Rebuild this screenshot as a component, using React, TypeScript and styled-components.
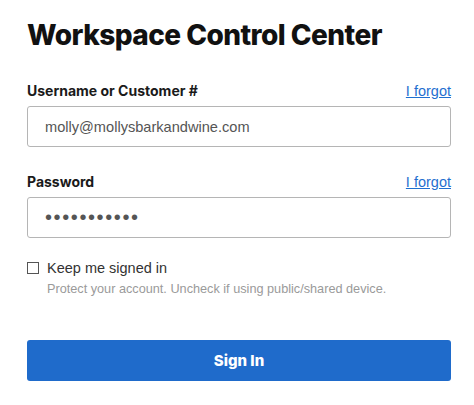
import styled, { createGlobalStyle } from "styled-components";

const GlobalStyle = createGlobalStyle`
  body {
    margin: 0;
    background: #fff;
    font-family: "Liberation Sans", Arial, sans-serif;
  }
`;

const Page = styled.div`
  width: 424px;
  padding: 18px 0 0 27px;
`;

const Title = styled.h1`
  margin: 0 0 30px;
  font-family: Inter, "Noto Sans", sans-serif;
  font-weight: 800;
  font-size: 28px;
  line-height: 34px;
  letter-spacing: -0.55px;
  color: #111;
`;

const Field = styled.div<{ $gap: number }>`
  margin-bottom: ${(p) => p.$gap}px;
`;

const LabelRow = styled.div`
  display: flex;
  justify-content: space-between;
  align-items: baseline;
  margin-bottom: 7px;
`;

const Label = styled.label`
  font-family: Inter, "Noto Sans", sans-serif;
  font-weight: 700;
  font-size: 14px;
  color: #1a1a1a;
`;

const Forgot = styled.a`
  font-size: 14.5px;
  color: #1f6fd0;
  text-decoration: underline;
  cursor: pointer;
`;

const Input = styled.input<{ $dots?: boolean }>`
  box-sizing: border-box;
  width: 100%;
  height: 41px;
  padding: 0 17px;
  border: 1px solid #b5b5b5;
  border-radius: 3px;
  font-family: "Liberation Sans", Arial, sans-serif;
  font-size: ${(p) => (p.$dots ? "20px" : "14.6px")};
  letter-spacing: ${(p) => (p.$dots ? "1.6px" : "0")};
  color: #555;
  outline: none;
`;

const CheckRow = styled.label`
  display: flex;
  align-items: center;
  gap: 8px;
  font-size: 14.5px;
  color: #333;
`;

const Box = styled.span`
  display: inline-block;
  width: 10px;
  height: 10px;
  border: 1px solid #555;
`;

const Hint = styled.div`
  margin: 6px 0 0 20px;
  font-size: 12.7px;
  color: #9a9a9a;
`;

const Button = styled.button`
  display: block;
  width: 100%;
  height: 41px;
  margin-top: 44px;
  border: none;
  border-radius: 3px;
  background: #1f6bcb;
  color: #fff;
  font-family: Inter, "Noto Sans", sans-serif;
  font-weight: 800;
  font-size: 15px;
`;

export default function App() {
  return (
    <>
      <GlobalStyle />
      <Page>
        <Title>Workspace Control Center</Title>
        <Field $gap={26}>
          <LabelRow>
            <Label>Username or Customer #</Label>
            <Forgot>I forgot</Forgot>
          </LabelRow>
          <Input readOnly value="molly@mollysbarkandwine.com" />
        </Field>
        <Field $gap={22}>
          <LabelRow>
            <Label>Password</Label>
            <Forgot>I forgot</Forgot>
          </LabelRow>
          <Input $dots readOnly type="password" value="mollysbark1" />
        </Field>
        <CheckRow>
          <Box />
          Keep me signed in
        </CheckRow>
        <Hint>Protect your account. Uncheck if using public/shared device.</Hint>
        <Button>Sign In</Button>
      </Page>
    </>
  );
}
